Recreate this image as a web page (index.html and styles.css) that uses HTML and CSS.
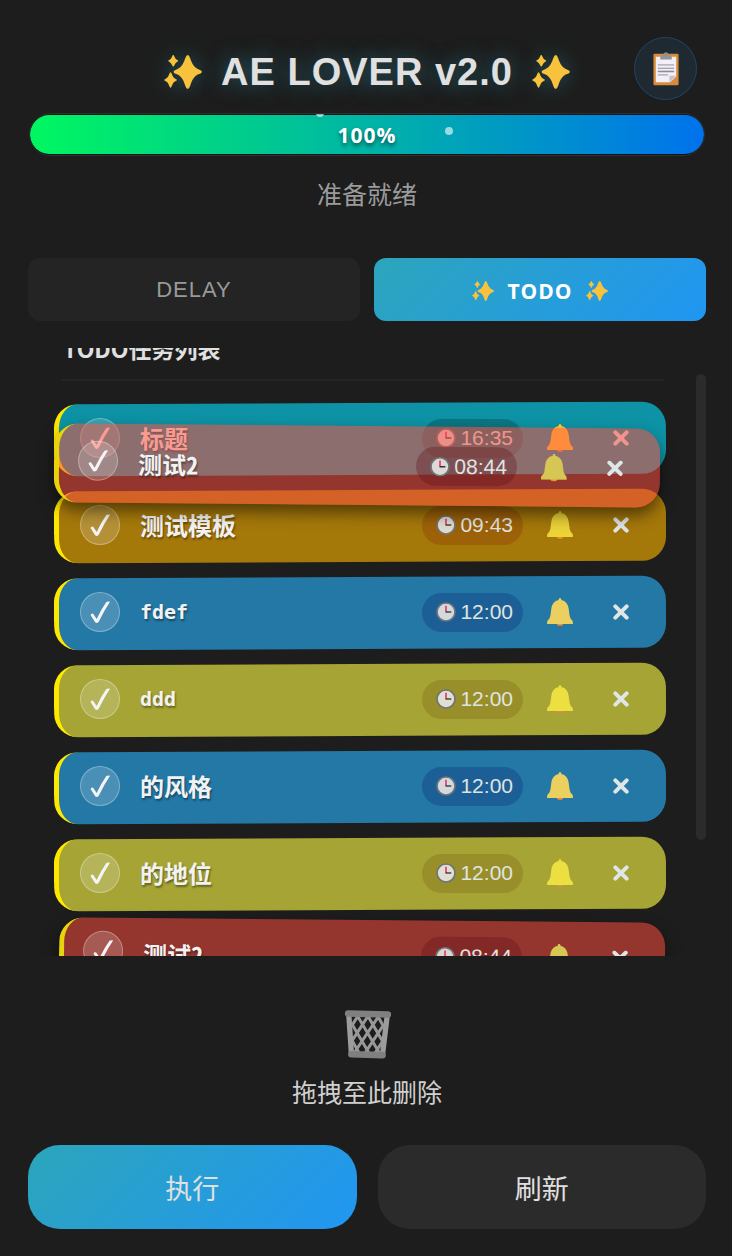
FILE: index.html
```html
<!DOCTYPE html>
<html lang="zh-CN">
<head>
<meta charset="utf-8">
<meta name="viewport" content="width=device-width, initial-scale=1">
<title>AE LOVER v2.0</title>
<link rel="stylesheet" href="styles.css">
</head>
<body>
<svg class="defs" aria-hidden="true">
  <symbol id="sparkles" viewBox="38 77 112 101">
    <path d="M108 77Q112 77 115 86Q122 108 132 115Q137 119 146 122Q150 124 150 127Q150 130 146 132Q137 135 132 139Q122 147 115 169Q112 178 108 178Q104 178 101 169Q94 147 84 139Q79 135 70 132Q66 130 66 127Q66 124 70 122Q79 119 84 115Q94 108 101 86Q104 77 108 77Z"/>
    <path d="M65 77Q67 77 68 81Q71 89 77 92Q80 93 80 95Q80 96 77 97Q71 100 68 108Q67 111 65 111Q63 111 62 108Q59 100 53 97Q50 96 50 95Q50 93 53 92Q59 89 62 81Q63 77 65 77Z"/>
    <path d="M57 128Q59 128 61 134Q64 145 72 148Q76 150 76 151Q76 153 72 154Q64 157 61 168Q59 174 57 174Q55 174 53 168Q50 157 42 154Q38 153 38 151Q38 150 42 148Q50 145 53 134Q55 128 57 128Z"/>
  </symbol>
  <symbol id="check" viewBox="0 0 60 66">
    <path d="M2 43Q1 40 5 38Q9 37 12 42L20 54Q34 24 49 3Q54 0 60 2Q42 29 27 61Q25 66 20 66Q17 66 15 63Z"/>
  </symbol>
  <symbol id="clock" viewBox="0 0 60 60">
    <circle cx="30" cy="30" r="27" fill="#e8e8e6" fill-opacity=".9" stroke="#6f7478" stroke-width="5"/>
    <path d="M30 11V31" stroke="#e0567c" stroke-width="6"/>
    <path d="M29 30H46" stroke="#333" stroke-width="4"/>
  </symbol>
  <symbol id="bell" viewBox="0 0 78 84">
    <path d="M27 72H51Q49 84 39 84Q29 84 27 72Z" fill="#f08a35"/>
    <path d="M35 4Q39-4 43 4V6C56 9 63 18 65 32L68 54Q70 63 75 66Q78 68 78 78H0Q0 68 3 66Q8 63 10 54L13 32C15 18 22 9 35 6Z" fill="currentColor"/>
  </symbol>
  <symbol id="cross" viewBox="0 0 48 48">
    <path d="M7 7L41 41M41 7L7 41" fill="none" stroke="currentColor" stroke-width="12" stroke-linecap="round"/>
  </symbol>
</svg>

<header class="header">
  <h1 class="title"><svg class="spark"><use href="#sparkles"/></svg><span>AE LOVER v2.0</span><svg class="spark"><use href="#sparkles"/></svg></h1>
  <button class="clip-btn" type="button" aria-label="Clipboard">
    <svg viewBox="670 100 76 100" width="26" height="34">
      <rect x="671" y="105" width="74" height="93" rx="4" fill="#d98b3c"/>
      <path d="M678 114H738V172L720 189H678Z" fill="#f3eff8"/>
      <path d="M738 170H718V189Z" fill="#c5bfd0"/>
      <path d="M691 122V114Q691 110 698 109Q702 101 708 101Q714 101 718 109Q725 110 725 114V122Z" fill="#949494"/>
      <circle cx="708" cy="107" r="3" fill="#b87a3c"/>
      <path d="M684 138H732M684 158H732M684 167H714" stroke="#bdb9c3" stroke-width="5"/>
      <path d="M684 148H732M684 157H732" stroke="#8f8c94" stroke-width="3"/>
    </svg>
  </button>
</header>

<div class="progress" role="progressbar" aria-valuenow="100" aria-valuemin="0" aria-valuemax="100">
  <div class="progress-fill" style="width:100%"></div>
  <i class="dot dot-a"></i><i class="dot dot-b"></i>
  <span class="progress-text">100%</span>
</div>
<p class="status">准备就绪</p>

<nav class="tabs">
  <button class="tab" type="button">DELAY</button>
  <button class="tab active" type="button"><svg class="spark"><use href="#sparkles"/></svg><span>TODO</span><svg class="spark"><use href="#sparkles"/></svg></button>
</nav>

<main class="panel">
  <section class="list">
    <h2 class="list-title">TODO任务列表</h2>
    <ul class="items">
      <li class="item teal"><button class="done" type="button" aria-label="完成"><svg><use href="#check"/></svg></button><span class="name">标题</span><span class="time"><svg><use href="#clock"/></svg>16:35</span><button class="act bell" type="button" aria-label="提醒"><svg><use href="#bell"/></svg></button><button class="act close" type="button" aria-label="删除"><svg><use href="#cross"/></svg></button></li>
      <li class="item amber"><button class="done" type="button" aria-label="完成"><svg><use href="#check"/></svg></button><span class="name">测试模板</span><span class="time"><svg><use href="#clock"/></svg>09:43</span><button class="act bell" type="button" aria-label="提醒"><svg><use href="#bell"/></svg></button><button class="act close" type="button" aria-label="删除"><svg><use href="#cross"/></svg></button></li>
      <li class="item blue"><button class="done" type="button" aria-label="完成"><svg><use href="#check"/></svg></button><span class="name latin">fdef</span><span class="time"><svg><use href="#clock"/></svg>12:00</span><button class="act bell" type="button" aria-label="提醒"><svg><use href="#bell"/></svg></button><button class="act close" type="button" aria-label="删除"><svg><use href="#cross"/></svg></button></li>
      <li class="item olive"><button class="done" type="button" aria-label="完成"><svg><use href="#check"/></svg></button><span class="name latin">ddd</span><span class="time"><svg><use href="#clock"/></svg>12:00</span><button class="act bell" type="button" aria-label="提醒"><svg><use href="#bell"/></svg></button><button class="act close" type="button" aria-label="删除"><svg><use href="#cross"/></svg></button></li>
      <li class="item blue"><button class="done" type="button" aria-label="完成"><svg><use href="#check"/></svg></button><span class="name">的风格</span><span class="time"><svg><use href="#clock"/></svg>12:00</span><button class="act bell" type="button" aria-label="提醒"><svg><use href="#bell"/></svg></button><button class="act close" type="button" aria-label="删除"><svg><use href="#cross"/></svg></button></li>
      <li class="item olive"><button class="done" type="button" aria-label="完成"><svg><use href="#check"/></svg></button><span class="name">的地位</span><span class="time"><svg><use href="#clock"/></svg>12:00</span><button class="act bell" type="button" aria-label="提醒"><svg><use href="#bell"/></svg></button><button class="act close" type="button" aria-label="删除"><svg><use href="#cross"/></svg></button></li>
      <li class="item red source"><button class="done" type="button" aria-label="完成"><svg><use href="#check"/></svg></button><span class="name">测试2</span><span class="time"><svg><use href="#clock"/></svg>08:44</span><button class="act bell" type="button" aria-label="提醒"><svg><use href="#bell"/></svg></button><button class="act close" type="button" aria-label="删除"><svg><use href="#cross"/></svg></button></li>
    </ul>
    <div class="item red ghost"><button class="done" type="button" aria-label="完成"><svg><use href="#check"/></svg></button><span class="name">测试2</span><span class="time"><svg><use href="#clock"/></svg>08:44</span><button class="act bell" type="button" aria-label="提醒"><svg><use href="#bell"/></svg></button><button class="act close" type="button" aria-label="删除"><svg><use href="#cross"/></svg></button></div>
  </section>
  <div class="rail"><div class="thumb"></div></div>
</main>

<section class="drop">
  <svg viewBox="0 0 142 148" width="47" height="49" fill="none">
    <g transform="rotate(1.5 71 74)">
      <path d="M40 20L108 128M72 20L116 92M102 20L120 50M24 45L76 128M24 92L46 128M102 20L34 128M70 20L26 92M40 20L22 50M118 45L66 128M118 92L96 128" stroke="#989898" stroke-width="9"/>
      <path d="M13 16L24 134M129 16L118 134" stroke="#9c9c9c" stroke-width="16"/>
      <path d="M11 12H131M24 135H118" stroke="#808080" stroke-width="20" stroke-linecap="round"/>
    </g>
  </svg>
  <p class="drop-text">拖拽至此删除</p>
</section>

<footer class="actions">
  <button class="action primary" type="button">执行</button>
  <button class="action" type="button">刷新</button>
</footer>
</body>
</html>
```
FILE: styles.css
```css
* { box-sizing: border-box; }

body {
  display: flex;
  flex-direction: column;
  height: 100vh;
  margin: 0;
  padding: 37px 26px 27px 28px;
  background: #1d1d1d;
  color: #e0e0e0;
  font-family: "Liberation Sans", "Noto Sans CJK SC", sans-serif;
}

button {
  margin: 0;
  padding: 0;
  border: 0;
  background: none;
  color: inherit;
  font: inherit;
}

h1, h2, p, ul { margin: 0; padding: 0; }
svg { flex: none; }
.defs { position: absolute; width: 0; height: 0; }

.header {
  display: grid;
  grid-template-columns: 1fr auto 1fr;
  align-items: end;
}

.title {
  grid-column: 2;
  display: flex;
  align-items: center;
  gap: 19px;
  font-size: 38px;
  line-height: 56px;
  letter-spacing: 1px;
  white-space: nowrap;
  text-shadow: 0 0 20px rgba(44, 165, 187, .5);
}

.spark { fill: #f9c23c; }
.title .spark {
  width: 38px;
  height: 34px;
  filter: drop-shadow(0 0 10px rgba(44, 165, 187, .4));
}

.clip-btn {
  grid-column: 3;
  justify-self: end;
  display: grid;
  place-items: center;
  width: 63px;
  height: 63px;
  margin-right: 9px;
  border: 1px solid #1d4669;
  border-radius: 50%;
  background: #1e2931;
}

.progress {
  position: relative;
  flex: none;
  height: 43px;
  margin: 13px 1px 0;
  padding: 1px 0;
  border: 1px solid #303030;
  border-radius: 22px;
  background: #101418;
  overflow: hidden;
}

.progress-fill {
  height: 100%;
  border-radius: 20px;
  background: linear-gradient(90deg, #00f760, #0072ed);
}

.progress-text {
  position: absolute;
  inset: 0;
  display: grid;
  place-items: center;
  color: #fff;
  font: bold 21px "Open Sans", sans-serif;
  letter-spacing: 1px;
  text-shadow: 0 3px 4px rgba(0, 0, 0, .5);
}

.dot {
  position: absolute;
  width: 8px;
  height: 8px;
  border-radius: 50%;
  background: rgba(255, 255, 255, .6);
}
.dot-a { left: 42.5%; top: -5px; }
.dot-b { left: 61.5%; top: 13px; }

.status {
  margin-top: 20px;
  color: #9b9b9b;
  font-size: 25px;
  line-height: 38px;
  text-align: center;
}

.tabs {
  display: grid;
  grid-template-columns: 1fr 1fr;
  gap: 14px;
  margin-top: 44px;
}

.tab {
  display: flex;
  align-items: center;
  justify-content: center;
  gap: 13px;
  height: 63px;
  border-radius: 12px;
  background: #242424;
  color: #999;
  font-size: 22px;
  letter-spacing: 1px;
}

.tab.active {
  padding-top: 2px;
  background: linear-gradient(135deg, #2ca5bb, #2196f3);
  color: #fff;
  font: bold 21px "Open Sans", sans-serif;
  letter-spacing: 1px;
}
.tab .spark { width: 22px; height: 20px; }

.panel {
  flex: 1;
  display: flex;
  min-height: 0;
  margin-top: 27px;
}

.list {
  position: relative;
  flex: 1;
  padding: 0 30px 0 26px;
  overflow: hidden;
}

.list-title {
  margin: -15px 2px 22px 7px;
  padding: 0 2px 16px;
  border-bottom: 2px solid #252525;
  font: bold 23px/30px "Noto Sans CJK SC", sans-serif;
}

.items {
  display: flex;
  flex-direction: column;
  gap: 15px;
  list-style: none;
}

.item {
  --bg: #2378a6;
  --pill: #1c5f96;
  --bell: #ebd060;
  position: relative;
  z-index: 0;
  display: flex;
  align-items: center;
  height: 72px;
  padding: 0 25px 2px 26px;
}

.item::before {
  content: "";
  position: absolute;
  inset: 0;
  z-index: -1;
  border-left: 5px solid #ffe800;
  border-radius: 24px;
  background: var(--bg);
  transform: rotate(-.25deg);
}

.teal { --bg: #0d93a5; --pill: #0b7583; --bell: #ffd33c; }
.amber { --bg: #a5780a; --pill: #9d6108; --bell: #ebd338; }
.olive { --bg: #a5a434; --pill: #988f2a; --bell: #ebdf42; }
.red { --bg: rgba(255, 78, 63, .53); --pill: rgba(90, 10, 20, .3); --bell: #d6c653; }

.source, .ghost {
  height: 79px;
  padding: 0 25px 0 24px;
  transform: rotate(.5deg);
}
.source::before, .ghost::before {
  border-left-color: #e8d40a;
  box-shadow: 0 8px 16px rgba(0, 0, 0, .5);
  transform: none;
}
.source { margin: -5px 1px 0 5px; padding-bottom: 8px; }
.ghost {
  position: absolute;
  left: 26px;
  right: 36px;
  top: 78px;
  z-index: 2;
}

.done {
  display: grid;
  place-items: center;
  width: 40px;
  height: 40px;
  margin-right: 20px;
  border: 1px solid rgba(255, 255, 255, .3);
  border-radius: 50%;
  background: rgba(255, 255, 255, .18);
}
.done svg { width: 20px; height: 22px; fill: #f4f4f4; }
.red .done { margin-bottom: 5px; }

.name {
  flex: 1;
  color: #f2f2f2;
  font: bold 24px/36px "Noto Sans Mono CJK SC", "Noto Sans CJK SC", monospace;
  text-shadow: 1px 2px 2px rgba(0, 0, 0, .4);
}
.name.latin { font: bold 20px/36px "DejaVu Sans Mono", monospace; }

.time {
  display: flex;
  align-items: center;
  gap: 4px;
  height: 39px;
  margin-right: 17px;
  padding: 0 10px 0 14px;
  border-radius: 20px;
  background: var(--pill);
  color: #e0e4e0;
  font-size: 21px;
}
.time svg { width: 20px; height: 20px; }

.act {
  display: grid;
  place-items: center;
  width: 40px;
  height: 40px;
}
.bell { margin-right: 21px; color: var(--bell); }
.bell svg { width: 26px; height: 28px; }
.close { color: #dfe6e6; }
.close svg { width: 16px; height: 16px; }

.rail { width: 10px; padding-top: 26px; }
.thumb { height: 80%; border-radius: 5px; background: #2b2b2b; }

.drop {
  display: flex;
  flex-direction: column;
  align-items: center;
  gap: 15px;
  padding: 54px 0 33px;
}
.drop-text { color: #d0d0d0; font-size: 25px; line-height: 38px; }

.actions {
  display: grid;
  grid-template-columns: 1fr 1fr;
  gap: 21px;
}
.action {
  height: 84px;
  border-radius: 32px;
  background: #2b2b2b;
  font-size: 27px;
}
.primary { background: linear-gradient(135deg, #2ca5bb, #2196f3); }
```
